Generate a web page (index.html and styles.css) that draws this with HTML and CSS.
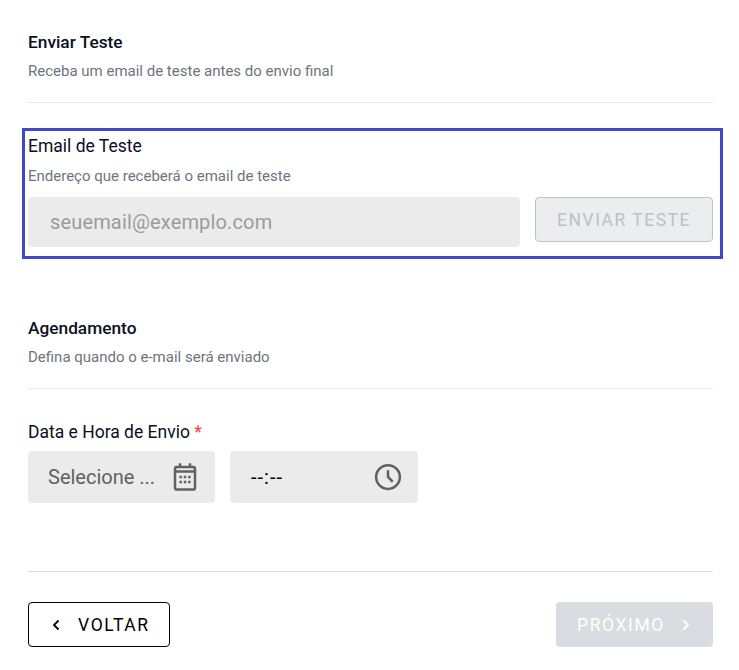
FILE: index.html
```html
<!DOCTYPE html>
<html lang="pt-BR">
<head>
  <meta charset="UTF-8" />
  <meta name="viewport" content="width=device-width, initial-scale=1.0"/>
  <title>Enviar Teste</title>
  <link rel="stylesheet" href="styles.css">
</head>
<body>
  <div class="pagina">
    <section class="secao">
      <h2>Enviar Teste</h2>
      <p class="sub">Receba um email de teste antes do envio final</p>
    </section>

    <div class="campo-teste">
      <label class="rotulo" for="emailTeste">Email de Teste</label>
      <p class="sub ajuda">Endereço que receberá o email de teste</p>
      <div class="linha-teste">
        <input class="entrada" id="emailTeste" type="text" placeholder="seuemail@exemplo.com">
        <button class="btn-teste" disabled>ENVIAR TESTE</button>
      </div>
    </div>

    <section class="secao secao-agenda">
      <h2>Agendamento</h2>
      <p class="sub">Defina quando o e-mail será enviado</p>
    </section>

    <div class="campo-data">
      <div class="rotulo">Data e Hora de Envio <span class="obrigatorio">*</span></div>
      <div class="linha-data">
        <div class="caixa">
          <span class="selecione">Selecione ...</span>
          <svg class="icone" viewBox="0 0 24 24" width="30" height="30" aria-hidden="true">
            <path fill="#616161" d="M7 1h2v2h6V1h2v2h1.500A2.500 2.500 0 0 1 21 5.500v15a2.500 2.500 0 0 1-2.500 2.500h-13A2.500 2.500 0 0 1 3 20.500v-15A2.500 2.500 0 0 1 5.500 3H7V1zM5 8.500v11.800c0 .4.300.7.700.7h12.600c.4 0 .7-.3.700-.7V8.500H5zm0-2h14v-.8c0-.4-.3-.7-.7-.7H5.700c-.4 0-.7.300-.7.700v.8z"/>
            <rect fill="#616161" x="7.500" y="11" width="2" height="2"/>
            <rect fill="#616161" x="11" y="11" width="2" height="2"/>
            <rect fill="#616161" x="14.500" y="11" width="2" height="2"/>
            <rect fill="#616161" x="7.500" y="15" width="2" height="2"/>
            <rect fill="#616161" x="11" y="15" width="2" height="2"/>
            <rect fill="#616161" x="14.500" y="15" width="2" height="2"/>
          </svg>
        </div>
        <div class="caixa caixa-hora">
          <span class="hora">--:--</span>
          <svg class="icone" viewBox="0 0 24 24" width="30" height="30" aria-hidden="true">
            <circle cx="12" cy="12" r="9.500" fill="none" stroke="#616161" stroke-width="2"/>
            <path d="M12 6.500V12l3.800 3.800" fill="none" stroke="#616161" stroke-width="2"/>
          </svg>
        </div>
      </div>
    </div>

    <div class="rodape">
      <button class="btn btn-voltar">
        <svg viewBox="0 0 10 14" width="10" height="14" aria-hidden="true"><path d="M7.500 2.500 3 7l4.500 4.500" fill="none" stroke="#000" stroke-width="1.800"/></svg>
        VOLTAR
      </button>
      <button class="btn btn-proximo" disabled>
        PRÓXIMO
        <svg viewBox="0 0 10 14" width="10" height="14" aria-hidden="true"><path d="M2.500 2.500 7 7l-4.500 4.500" fill="none" stroke="#fff" stroke-width="1.800"/></svg>
      </button>
    </div>
  </div>
</body>
</html>
```

FILE: styles.css
```css
* { box-sizing: border-box; }
body { margin: 0; background: #fff; font-family: Roboto, "Liberation Sans", sans-serif; color: #0a0f1e; }
.pagina { padding: 32px 26px 0 28px; }
h2 { margin: 0; font-size: 17.3px; line-height: 20px; font-weight: 500; }
.sub { margin: 0; font-size: 15px; line-height: 20px; color: #6c757d; }
.secao { border-bottom: 1px solid #e8e8e8; height: 71px; }
.secao .sub { margin-top: 9px; }
.rotulo { display: block; font-size: 17.5px; line-height: 20px; }
.obrigatorio { color: #f03e3e; }

.campo-teste { margin: 25px -10px 0 -6px; padding: 5px 7px 9px 3px; border: 3px solid #3f48cc; height: 131px; }
.ajuda { margin-top: 10px; }
.linha-teste { display: flex; gap: 15px; align-items: flex-start; margin-top: 11px; }
.entrada { flex: 1; min-width: 0; height: 50px; padding: 0 22px; border: none; border-radius: 4px; background: #ebebeb; font: 20px Roboto, sans-serif; letter-spacing: .15px; }
.entrada::placeholder { color: #9b9b9b; opacity: 1; }
.btn-teste { width: 178px; height: 45px; border: 1px solid #c2c2c2; border-radius: 4px; background: #ecedef; color: #c0c0c0; font: 400 17.5px Roboto, sans-serif; letter-spacing: 1.500px; }

.secao-agenda { margin-top: 59px; }
.campo-data { margin-top: 33px; }
.linha-data { display: flex; gap: 15px; margin-top: 9px; }
.caixa { display: flex; align-items: center; justify-content: space-between; width: 187px; height: 52px; padding: 0 15px 0 20px; border-radius: 4px; background: #ebebeb; }
.caixa-hora { width: 188px; padding: 0 15px 0 21px; }
.selecione { font-size: 20px; color: #616161; }
.hora { font-size: 20px; letter-spacing: 1px; color: #000; }
.icone { display: block; flex: none; }

.rodape { display: flex; justify-content: space-between; margin-top: 68px; padding-top: 30px; border-top: 1px solid #e0e0e0; }
.btn { display: flex; align-items: center; height: 45px; border-radius: 4px; font: 400 17.5px Roboto, sans-serif; letter-spacing: 1.600px; }
.btn-voltar { width: 142px; gap: 17px; padding: 0 0 0 22px; border: 1px solid #000; background: #fff; color: #000; }
.btn-proximo { width: 157px; gap: 16px; padding: 0 0 0 21px; border: none; background: #d9dce0; color: #fff; }
```
